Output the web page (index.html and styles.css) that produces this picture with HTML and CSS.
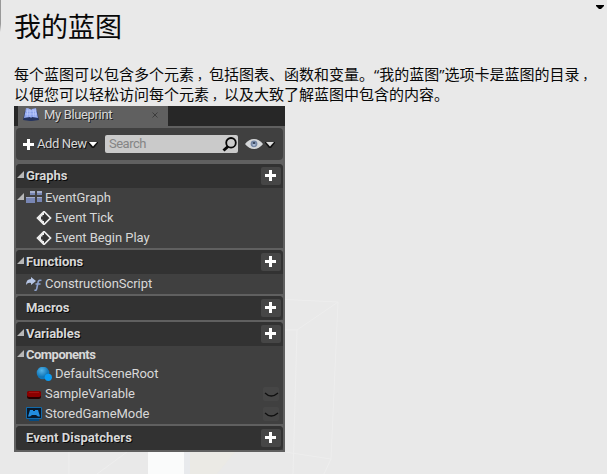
FILE: index.html
```html
<!DOCTYPE html>
<html lang="zh-CN">
<head>
<meta charset="utf-8">
<title>我的蓝图</title>
<link rel="stylesheet" href="styles.css">
</head>
<body>
<svg class="backdrop" viewBox="0 0 607 474" aria-hidden="true">
  <path d="M0 0h1v24l-1 8z" fill="#999"/>
  <path d="M184 452h7v22h-7z" fill="#e8eaed"/>
  <path d="M148 452h36v22h-36z" fill="#fafbfb"/>
  <path d="M190 452h45l-18 22h-27z" fill="#ebeae5"/>
  <path d="M285 299.500l53 2.500-7 157-46-7M338 302l-41 28h-12M297 330l-4 144M331 459l-7 15M69 452v22M127 452l-30 22" fill="none" stroke="#eeeeee"/>
</svg>
<svg class="menu-arrow" viewBox="0 0 8 4"><path d="M0 0h8v1L5 4H3L0 1z"/></svg>
<main>
  <h1>我的蓝图</h1>
  <p>每个蓝图可以包含多个元素<span class="comma">，</span>包括图表、函数和变量。<span class="quote">“</span>我的蓝图<span class="quote">”</span>选项卡是蓝图的目录<span class="comma">，</span><br>以便您可以轻松访问每个元素<span class="comma">，</span>以及大致了解蓝图中包含的内容。</p>
  <section class="panel">
    <div class="tabs"><div class="tab">
      <svg class="book" viewBox="0 0 16 14"><path d="M2 3l-2 9 7 1h2l7-1-2-9z" fill="#26345f"/><path d="M3 0l4 1 1 1 1-1 4-1 2 10-6-1-1 1-1-1-6 1z" fill="#8ea5ed"/><path d="M5 0L4 9M7 1v8M10 1l1 8M12 1l1 8M3 3l10 0M2 6h12" stroke="#c3d0ff" stroke-width=".7" fill="none"/></svg>
      <span>My Blueprint</span>
      <svg class="close" viewBox="0 0 6 6"><path d="M.5.5l5 5M5.500.5l-5 5" stroke="#3c3c3c" fill="none"/></svg>
    </div></div>
    <div class="toolbar">
      <svg class="add-icon" viewBox="0 0 11 11"><path d="M4 0h3v4h4v3H7v4H4V7H0V4h4z" fill="#fff"/></svg>
      <span class="add">Add New</span>
      <svg class="down" viewBox="0 0 10 7"><path d="M0 1h10v1L6 7H4L0 2z" fill="#111"/><path d="M1 1h8L5 5.500z" fill="#fff"/></svg>
      <div class="search"><span>Search</span><svg viewBox="0 0 15 15"><circle cx="9" cy="5.800" r="4.800" fill="none" stroke="#050505" stroke-width="1.800"/><path d="M6 9.500l-4.500 4" stroke="#050505" stroke-width="3"/></svg></div>
      <svg class="eye" viewBox="0 0 18 10"><path d="M0 5Q4 0 9 0t9 5q-4 5-9 5T0 5z" fill="#d5d7d9"/><circle cx="9" cy="4.800" r="3.400" fill="#7688a6"/><circle cx="9" cy="5.500" r="1.500" fill="#a9b9d2"/><path d="M8 3h2v2H8z" fill="#3c4b63"/></svg>
      <svg class="down" viewBox="0 0 10 7"><path d="M0 1h10v1L6 7H4L0 2z" fill="#111"/><path d="M1 1h8L5 5.500z" fill="#ddd"/></svg>
    </div>
    <div class="group">
      <div class="head"><i class="fold"></i><b>Graphs</b><span class="plus"></span></div>
      <div class="row"><i class="fold"></i><svg class="icon" viewBox="0 0 16 14"><path d="M4 0h5v4H4zM11 0h5v4h-5zM0 6h9v6H0zM11 6h5v5h-5z" fill="#7886b4"/><path d="M4 0h5v2H4zM11 0h5v2h-5zM0 6h9v1H0zM11 6h5v1h-5z" fill="#a5aecb"/></svg><span>EventGraph</span></div>
      <div class="row deep"><svg class="icon" viewBox="0 0 16 14"><path d="M8 .5l6.500 6.500L8 13.500 1.500 7z" fill="#353535" stroke="#eee" stroke-width="1.700"/><path d="M8 1v3H6.500v1.500H5v3h1.500V10H8v3L2 7z" fill="#eee"/></svg><span>Event Tick</span></div>
      <div class="row deep"><svg class="icon" viewBox="0 0 16 14"><path d="M8 .5l6.500 6.500L8 13.500 1.500 7z" fill="#353535" stroke="#eee" stroke-width="1.700"/><path d="M8 1v3H6.500v1.500H5v3h1.500V10H8v3L2 7z" fill="#eee"/></svg><span>Event Begin Play</span></div>
    </div>
    <div class="group">
      <div class="head"><i class="fold"></i><b>Functions</b><span class="plus"></span></div>
      <div class="row"><svg class="icon" viewBox="0 0 16 14"><path d="M0 8q0-6 5-6V0l5 4-5 4V6Q2 5 0 8z" fill="#b6c5e4"/><path d="M15.500 3.500q-3-1-3.500 2l-1.200 6q-.3 2.300-2.300 1.500M9.500 7h5" fill="none" stroke="#8ea2cd" stroke-width="1.600"/></svg><span>ConstructionScript</span></div>
    </div>
    <div class="group"><div class="head"><b>Macros</b><span class="plus"></span></div></div>
    <div class="group">
      <div class="head"><i class="fold"></i><b>Variables</b><span class="plus"></span></div>
      <div class="row sub"><i class="fold"></i><b>Components</b></div>
      <div class="row deep"><svg class="icon" viewBox="0 0 16 14"><defs><radialGradient id="ball" cx=".4" cy=".3"><stop stop-color="#56b5e8"/><stop offset="1" stop-color="#1277b8"/></radialGradient></defs><circle cx="7" cy="6" r="6.300" fill="url(#ball)"/><circle cx="12.300" cy="10.300" r="3.600" fill="#0a9cf4"/></svg><span>DefaultSceneRoot</span></div>
      <div class="row"><svg class="icon" viewBox="0 0 16 14"><rect x="1" y="4" width="14" height="8" rx="2.500" fill="#260000"/><rect x="1" y="4" width="14" height="6" rx="2" fill="#8b0000"/><path d="M3 5.500h10" stroke="#a31212"/></svg><span>SampleVariable</span><span class="closed-eye"><svg viewBox="0 0 16 14"><path d="M2 6q6 6 13 0" fill="none" stroke="#101010" stroke-width="1.300"/></svg></span></div>
      <div class="row"><svg class="icon" viewBox="0 0 16 14"><path d="M.5.5h15v11H.5z" fill="#08182a" stroke="#126aaa"/><path d="M4 3h3v1h2V3h3l2 6.500h-2L10 8H6l-2 1.500H2z" fill="#218de0"/><path d="M3 13h10" stroke="#064a80" stroke-width="2"/></svg><span>StoredGameMode</span><span class="closed-eye"><svg viewBox="0 0 16 14"><path d="M2 6q6 6 13 0" fill="none" stroke="#101010" stroke-width="1.300"/></svg></span></div>
    </div>
    <div class="group"><div class="head"><b class="wide">Event Dispatchers</b><span class="plus"></span></div></div>
  </section>
</main>
</body>
</html>
```
FILE: styles.css
```css
* { box-sizing: border-box; }
body { margin: 0; width: 607px; height: 474px; overflow: hidden; background: #e9e9e9; color: #080808; font-family: "Noto Sans CJK SC", sans-serif; }
svg { display: block; flex: none; }
.backdrop { position: absolute; inset: 0; width: 607px; height: 474px; }
.menu-arrow { position: absolute; left: 596px; top: 5px; width: 8px; height: 4px; }
main { position: relative; padding: 6px 0 0 14px; }
h1 { margin: 0; height: 58px; font-size: 27px; line-height: 39px; font-weight: 400; }
p { margin: 0; height: 42px; font-size: 15px; line-height: 20px; white-space: nowrap; }
.comma { padding-left: 3px; font-size: 12px; line-height: 1; }
.quote { font-family: "Open Sans", sans-serif; line-height: 1; }
.panel { width: 271px; height: 346px; padding: 0 2px 2px; background: #606060; color: #d8d8d8; font: 13px/20px Roboto, sans-serif; letter-spacing: -0.05px; display: flex; flex-direction: column; }
.tabs { height: 20px; margin: 0 -2px; padding-left: 4px; background: #272727; flex: none; }
.tab { display: flex; align-items: center; width: 150px; height: 20px; padding: 0 10px 0 5px; background: #606060; line-height: 18px; letter-spacing: -0.35px; text-shadow: 1px 1px #222; }
.tab span { margin-left: 5px; position: relative; top: -1px; }
.book { width: 16px; height: 14px; margin-top: -2px; }
.close { width: 6px; height: 6px; margin-left: auto; margin-top: -2px; }
.toolbar { height: 32px; margin: 2px 0 4px; padding: 0 8px 0 7px; display: flex; align-items: center; background: #404040; border-radius: 4px; flex: none; }
.add-icon { width: 11px; height: 11px; }
.add { margin-left: 3px; width: 49px; white-space: nowrap; letter-spacing: -0.4px; text-shadow: 1px 1px #111; }
.down { width: 10px; height: 7px; margin-left: 2px; }
.search { display: flex; align-items: center; justify-content: space-between; width: 134px; height: 18px; margin-left: 7px; padding: 0 1px 0 4px; background: #cacaca; border-radius: 2px; color: #858585; letter-spacing: -0.5px; }
.search svg { width: 15px; height: 15px; }
.eye { width: 18px; height: 10px; margin-left: 7px; }
.eye + .down { margin-left: 2px; }
.group { margin-bottom: 2px; background: #404040; border-radius: 4px 4px 0 0; flex: none; }
.head, .row { position: relative; display: flex; align-items: center; height: 20px; padding-left: 10px; white-space: nowrap; }
.head { height: 24px; padding-right: 2px; background: #323232; border-radius: 4px 4px 0 0; text-shadow: 1px 1px #080808; }
.head:only-child { border-radius: 4px; }
.head b, .row b { font-size: 13px; font-weight: 700; }
.row b { letter-spacing: -0.5px; }
.head .wide { letter-spacing: 0.03px; }
.sub { height: 18px; }
.deep { padding-left: 20px; }
.fold { position: absolute; left: 1px; top: calc(50% - 5px); width: 7px; height: 7px; background: #b8b8b8; clip-path: polygon(100% 0, 100% 100%, 0 100%); }
.icon { width: 16px; height: 14px; margin-right: 3px; }
.plus { margin-left: auto; width: 20px; height: 18px; border-radius: 2px; background: linear-gradient(#fff, #fff) 4px 7px / 11px 3px no-repeat, linear-gradient(#fff, #fff) 8px 3px / 3px 11px no-repeat, #464646; }
.closed-eye { margin-left: auto; margin-right: 4px; width: 16px; height: 14px; background: #464646; border-radius: 2px; }
.closed-eye svg { width: 16px; height: 14px; }
```
